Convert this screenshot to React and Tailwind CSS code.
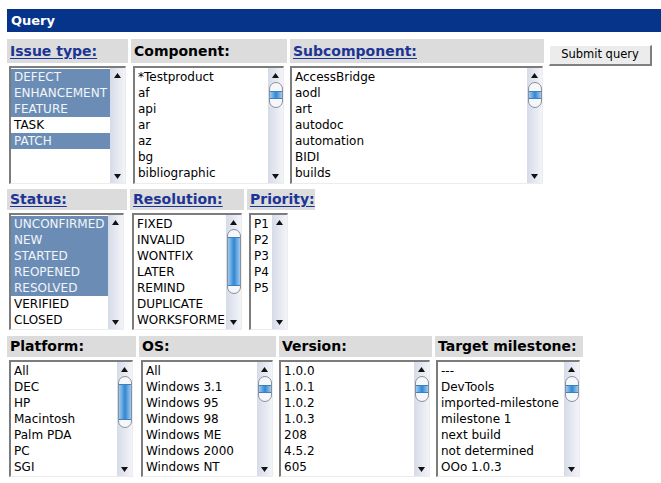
import React from 'react';

const THUMB_SMALL = { wrap: 'h-[26px]', blue: 'h-[8px]' };
const THUMB_MID = { wrap: 'h-[52px]', blue: 'h-[36px]' };
const THUMB_TALL = { wrap: 'h-[65px]', blue: 'h-[49px]' };

function Arrow({ up }) {
    return (
        <div className="h-[14px] flex items-center justify-center">
            <svg width="7" height="5" viewBox="0 0 7 5">
                {up ? <path d="M0 5 L3.5 0 L7 5 Z" fill="#111" /> : <path d="M0 0 L3.5 5 L7 0 Z" fill="#111" />}
            </svg>
        </div>
    );
}

function Scrollbar({ thumb }) {
    return (
        <div className="w-[15px] shrink-0 flex flex-col bg-linear-to-r from-[#d6dbe8] to-[#f3f4f9]">
            <Arrow up />
            <div className="flex-1 flex flex-col items-center">
                {thumb && (
                    <div className={`${thumb.wrap} w-[14px] rounded-[7px] border border-[#8a8f99] bg-[#f6f7fa] flex flex-col justify-center overflow-hidden`}>
                        <div className={`${thumb.blue} w-full bg-linear-to-r from-[#9ccbef] via-[#2e86d2] to-[#9ccbef] border-y border-[#3b7fbf]`}></div>
                    </div>
                )}
            </div>
            <Arrow />
        </div>
    );
}

function Listbox({ items, selected = [], thumb, className }) {
    return (
        <div className={`${className} flex bg-white border-t-2 border-l-2 border-[#7c7c7c] border-r border-b border-r-[#ececec] border-b-[#ececec] overflow-hidden`}>
            <div className="flex-1 min-w-0 pt-px overflow-hidden">
                {items.map((it) => (
                    <div
                        key={it}
                        className={`h-[16px] leading-[17px] pl-[3px] whitespace-nowrap text-[12px] ${selected.includes(it) ? 'bg-[#6b8db5] text-[#f2f5f9]' : 'text-black'}`}
                    >
                        {it}
                    </div>
                ))}
            </div>
            <Scrollbar thumb={thumb} />
        </div>
    );
}

function Label({ text, link, className }) {
    return (
        <div className={`${className} bg-[#dcdcdc] flex items-center pl-[3px] text-[14px] font-bold`}>
            {link ? <a href="#" className="text-[#1c3594] underline underline-offset-2">{text}</a> : <span className="text-black">{text}</span>}
        </div>
    );
}

export default function App() {
    return (
        <div className="w-[661px] h-[483px] overflow-hidden bg-white pl-[7px] pt-[9px] font-['DejaVu_Sans',sans-serif] select-none">
            <div className="w-[700px] h-[23px] bg-[#06348a] flex items-center pl-[4px] text-white text-[13px] font-bold">Query</div>

            {/* Row 1 */}
            <div className="flex gap-[3px] mt-[7px]">
                <div className="w-[121px]">
                    <Label text="Issue type:" link className="h-[24px]" />
                    <Listbox
                        className="w-[117px] ml-[2px] mt-[3px] h-[118px]"
                        items={['DEFECT', 'ENHANCEMENT', 'FEATURE', 'TASK', 'PATCH']}
                        selected={['DEFECT', 'ENHANCEMENT', 'FEATURE', 'PATCH']}
                    />
                </div>
                <div className="w-[156px]">
                    <Label text="Component:" className="h-[24px]" />
                    <Listbox
                        className="w-[151px] ml-[2px] mt-[3px] h-[118px]"
                        items={['*Testproduct', 'af', 'api', 'ar', 'az', 'bg', 'bibliographic']}
                        thumb={THUMB_SMALL}
                    />
                </div>
                <div className="w-[254px]">
                    <Label text="Subcomponent:" link className="h-[24px]" />
                    <Listbox
                        className="w-[253px] mt-[3px] h-[118px]"
                        items={['AccessBridge', 'aodl', 'art', 'autodoc', 'automation', 'BIDI', 'builds']}
                        thumb={THUMB_SMALL}
                    />
                </div>
                <div className="ml-[2px] pt-[2px]">
                    <button className="w-[103px] h-[21px] bg-[#ececec] border border-t-white border-l-white border-r-2 border-b-2 border-r-[#7f7f7f] border-b-[#7f7f7f] font-['DejaVu_Sans',sans-serif] text-[11.5px] text-black">
                        Submit query
                    </button>
                </div>
            </div>

            {/* Row 2 */}
            <div className="flex gap-[3px] mt-[5px]">
                <div className="w-[120px]">
                    <Label text="Status:" link className="h-[21px]" />
                    <Listbox
                        className="w-[115px] ml-[2px] mt-[3px] h-[117px]"
                        items={['UNCONFIRMED', 'NEW', 'STARTED', 'REOPENED', 'RESOLVED', 'VERIFIED', 'CLOSED']}
                        selected={['UNCONFIRMED', 'NEW', 'STARTED', 'REOPENED', 'RESOLVED']}
                    />
                </div>
                <div className="w-[114px]">
                    <Label text="Resolution:" link className="h-[21px]" />
                    <Listbox
                        className="w-[110px] ml-[2px] mt-[3px] h-[117px]"
                        items={['FIXED', 'INVALID', 'WONTFIX', 'LATER', 'REMIND', 'DUPLICATE', 'WORKSFORME']}
                        thumb={THUMB_TALL}
                    />
                </div>
                <div className="w-[68px]">
                    <Label text="Priority:" link className="h-[21px]" />
                    <Listbox className="w-[39px] ml-[2px] mt-[3px] h-[117px]" items={['P1', 'P2', 'P3', 'P4', 'P5']} />
                </div>
            </div>

            {/* Row 3 */}
            <div className="flex gap-[3px] mt-[6px]">
                <div className="w-[129px]">
                    <Label text="Platform:" className="h-[21px]" />
                    <Listbox
                        className="w-[124px] ml-[2px] mt-[3px] h-[117px]"
                        items={['All', 'DEC', 'HP', 'Macintosh', 'Palm PDA', 'PC', 'SGI']}
                        thumb={THUMB_MID}
                    />
                </div>
                <div className="w-[137px]">
                    <Label text="OS:" className="h-[21px]" />
                    <Listbox
                        className="w-[132px] ml-[2px] mt-[3px] h-[117px]"
                        items={['All', 'Windows 3.1', 'Windows 95', 'Windows 98', 'Windows ME', 'Windows 2000', 'Windows NT']}
                        thumb={THUMB_SMALL}
                    />
                </div>
                <div className="w-[153px]">
                    <Label text="Version:" className="h-[21px]" />
                    <Listbox
                        className="w-[151px] mt-[3px] h-[117px]"
                        items={['1.0.0', '1.0.1', '1.0.2', '1.0.3', '208', '4.5.2', '605']}
                        thumb={THUMB_SMALL}
                    />
                </div>
                <div className="w-[148px]">
                    <Label text="Target milestone:" className="h-[21px]" />
                    <Listbox
                        className="w-[144px] ml-[1px] mt-[3px] h-[117px]"
                        items={['---', 'DevTools', 'imported-milestone', 'milestone 1', 'next build', 'not determined', 'OOo 1.0.3']}
                        thumb={THUMB_SMALL}
                    />
                </div>
            </div>
        </div>
    );
}
